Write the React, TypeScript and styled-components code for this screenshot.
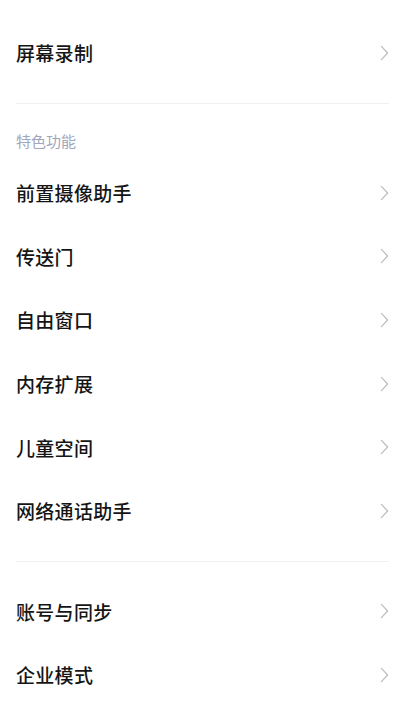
import React, { FC } from 'react';
import styled, { createGlobalStyle } from 'styled-components';

const GlobalStyle = createGlobalStyle`
  html, body {
    margin: 0;
    padding: 0;
    background: #fff;
  }
  body {
    font-family: "Noto Sans CJK SC", "Noto Sans", sans-serif;
  }
`;

type Section = {
  title?: string;
  items: string[];
};

const sections: Section[] = [
  { items: ['屏幕录制'] },
  {
    title: '特色功能',
    items: ['前置摄像助手', '传送门', '自由窗口', '内存扩展', '儿童空间', '网络通话助手'],
  },
  { items: ['账号与同步', '企业模式'] },
];

const Chevron: FC = () => (
  <ChevronSvg width="9" height="16" viewBox="0 0 9 16">
    <path d="M1.4 1.4 L7.6 8 L1.4 14.6" fill="none" stroke="#bcbcbc" strokeWidth="1.2" strokeLinecap="round" strokeLinejoin="round" />
  </ChevronSvg>
);

const App: FC = () => {
  return (
    <Page>
      <GlobalStyle />
      {sections.map((section, i) => (
        <Group key={i} first={i === 0} titled={!!section.title}>
          {section.title && <GroupTitle>{section.title}</GroupTitle>}
          {section.items.map(item => (
            <Row key={item}>
              <Label>{item}</Label>
              <Chevron />
            </Row>
          ))}
        </Group>
      ))}
    </Page>
  );
};
export default App;

const Page = styled.div`
  display: flex;
  flex-direction: column;
  padding: 21px 16px 0 16px;
  width: 100%;
  box-sizing: border-box;
`;

const Group = styled.section<{ first: boolean; titled: boolean }>`
  display: flex;
  flex-direction: column;
  border-top: ${p => (p.first ? 'none' : '1px solid #f0f0f0')};
  padding-top: ${p => (p.first || p.titled ? '0' : '18px')};
  padding-bottom: 18px;
`;

const GroupTitle = styled.h3`
  margin: 0;
  padding: 27px 0 10.4px 0;
  font-size: 15px;
  line-height: 20px;
  font-weight: 400;
  color: #9fa6bd;
`;

const Row = styled.div`
  display: flex;
  align-items: center;
  justify-content: space-between;
  height: 63.6px;
`;

const Label = styled.span`
  font-size: 19px;
  font-weight: 500;
  color: #151515;
  letter-spacing: 0.3px;
`;

const ChevronSvg = styled.svg`
  display: block;
  flex-shrink: 0;
`;
